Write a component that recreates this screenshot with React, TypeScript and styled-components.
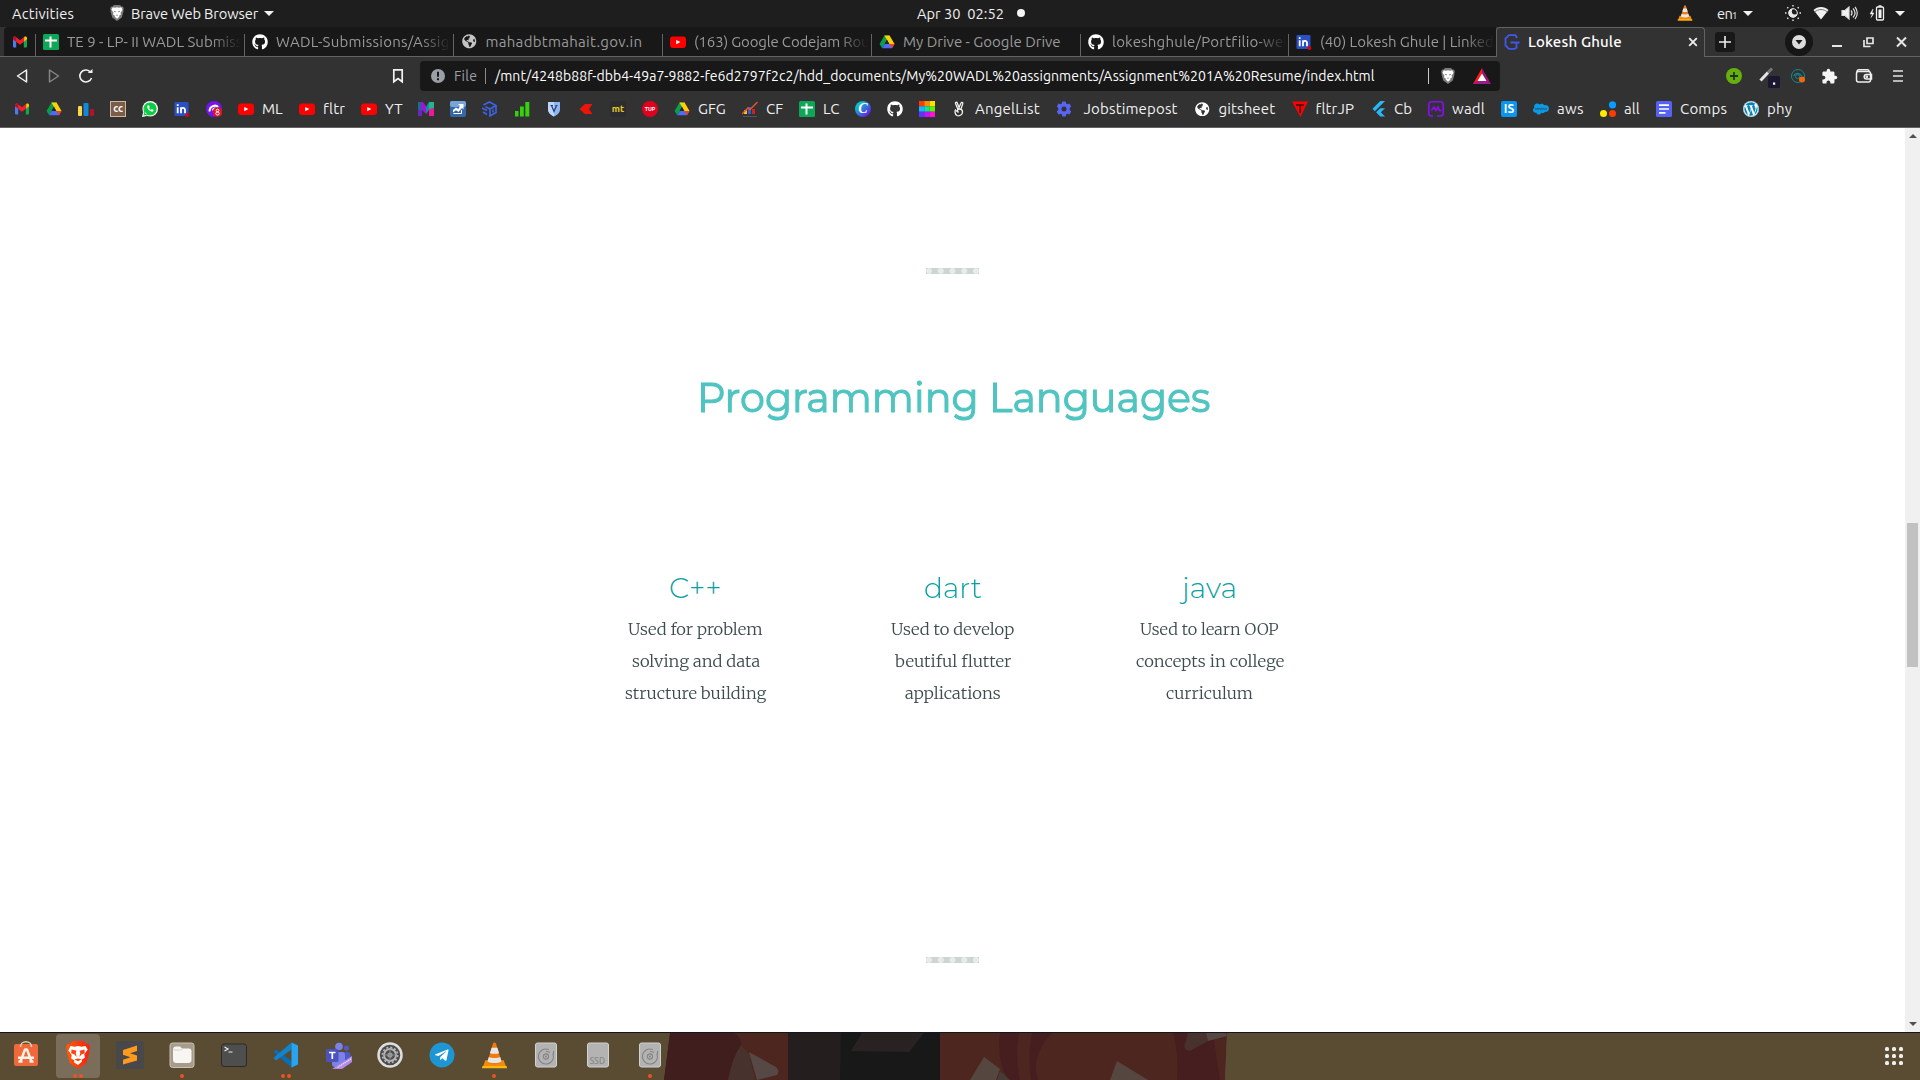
import React, { useLayoutEffect, useRef, useState } from 'react';
import styled, { createGlobalStyle, css } from 'styled-components';
import { FaGithub, FaWhatsapp, FaWordpress, FaSalesforce, FaTelegramPlane, FaGlobeAmericas } from 'react-icons/fa';
import { MdExtension } from 'react-icons/md';
import { SiFlutter } from 'react-icons/si';

const GlobalStyle = createGlobalStyle`
  *, *::before, *::after { box-sizing: border-box; }
  body { margin: 0; background: #fff; overflow: hidden; }
`;

const uiFont = `Ubuntu, 'Noto Sans', 'Open Sans', sans-serif`;

const Screen = styled.div`
  width: 1920px;
  height: 1080px;
  display: flex;
  flex-direction: column;
  overflow: hidden;
  background: #fff;
  font-family: ${uiFont};
  font-size: 14.67px;
  color: #f0f0f0;
`;

/* ---------- fitted text ---------- */

const FitBox = styled.span<{ $w: number }>`
  display: block;
  flex: none;
  width: ${p => p.$w}px;
  white-space: pre;
  text-align: left;
`;
const FitInner = styled.span`
  display: inline-block;
  transform-origin: 0 50%;
`;

function Fit({ w, children, stretch = false, className }: { w: number; children: string; stretch?: boolean; className?: string }) {
  const ref = useRef<HTMLSpanElement>(null);
  const [style, setStyle] = useState<React.CSSProperties>({});
  useLayoutEffect(() => {
    if (!ref.current) return;
    const natural = ref.current.offsetWidth;
    setStyle(stretch
      ? { transform: `scaleX(${w / natural})` }
      : { letterSpacing: `${(w - natural) / children.length}px` });
  }, [w, children, stretch]);
  return (
    <FitBox $w={w} className={className}>
      <FitInner ref={ref} style={style}>{children}</FitInner>
    </FitBox>
  );
}

/* ---------- system panel ---------- */

const Panel = styled.header`
  height: 27px;
  flex: none;
  display: grid;
  grid-template-columns: 917px 1fr 243px;
  background: #1e1e1e;
  line-height: 25px;
`;
const PanelGroup = styled.div<{ $pad?: number }>`
  display: flex;
  align-items: center;
  padding-left: ${p => p.$pad || 0}px;
  height: 26px;
`;
const Gap = styled.i<{ $w: number }>`
  flex: none;
  width: ${p => p.$w}px;
`;
const Caret = styled.i`
  flex: none;
  width: 0;
  height: 0;
  border: 5px solid transparent;
  border-top-color: #f2f2f2;
  border-bottom: 0;
`;
const StatusDot = styled.i`
  width: 8px;
  height: 8px;
  border-radius: 50%;
  background: #f5f5f5;
`;
const SmallText = styled.span`
  font-size: 9.5px;
  width: 6px;
  padding-top: 5px;
`;

/* ---------- tab strip ---------- */

const TabStrip = styled.nav`
  height: 30px;
  flex: none;
  display: flex;
  padding-left: 4px;
  background: linear-gradient(#636363, #636363) 0 29px / 100% 1px no-repeat #323232;
`;
const tabBase = css`
  flex: none;
  height: 29px;
  display: flex;
  align-items: center;
  gap: 8px;
  background: linear-gradient(#636363, #636363) 0 7px / 1px 22px no-repeat #181818;
`;
const PinnedTab = styled.div`
  ${tabBase}
  width: 31px;
  padding-left: 8px;
  background: #181818;
  border-top-left-radius: 4px;
`;
const Tab = styled.div<{ $w: number }>`
  ${tabBase}
  width: ${p => p.$w}px;
  padding-left: 8px;
  font-size: 15px;
  color: #9a9a9a;
`;
const TabTitle = styled.div<{ $fade?: boolean }>`
  flex: none;
  width: 176px;
  line-height: 28px;
  height: 28px;
  ${p => p.$fade && css`mask-image: linear-gradient(90deg, #000 82%, transparent 99%);`}
`;
const ActiveTab = styled.div`
  flex: none;
  width: 209px;
  height: 30px;
  display: flex;
  align-items: center;
  padding: 0 6px 2px 7px;
  background: #323232;
  border: 1px solid #636363;
  border-bottom: 0;
  border-radius: 4px 4px 0 0;
  color: #fff;
  font-weight: 500;
  font-size: 15px;
`;
const NewTab = styled.div`
  flex: none;
  width: 20px;
  height: 20px;
  margin: 5px 50px 0 10px;
  border-radius: 3px;
  background: #181818;
`;
const CircleButton = styled.div`
  flex: none;
  width: 28px;
  height: 28px;
  margin-top: 1px;
  border-radius: 50%;
  background: #161616;
`;
const WindowButtons = styled.div`
  display: flex;
  align-items: center;
  height: 29px;
  padding-left: 16px;
  gap: 16px;
`;

/* ---------- toolbar ---------- */

const Toolbar = styled.div`
  height: 38px;
  flex: none;
  display: flex;
  align-items: center;
  background: #323232;
`;
const AddressBar = styled.div`
  flex: none;
  width: 1080px;
  height: 30px;
  display: flex;
  align-items: center;
  padding-left: 11px;
  border-radius: 4px;
  background: #181818;
  line-height: 28px;
  margin-right: 226px;
`;
const Muted = styled.span`
  color: #9aa0a6;
  font-size: 14px;
`;
const Url = styled.span`
  color: #fff;
  font-size: 14px;
`;
const Divider = styled.i<{ $c?: string }>`
  flex: none;
  width: 1px;
  height: 16px;
  background: ${p => p.$c || '#8a8a8a'};
`;

const Bookmarks = styled.div`
  height: 33px;
  flex: none;
  display: flex;
  align-items: center;
  gap: 16px;
  padding: 0 0 4px 14px;
  background: #323232;
  border-bottom: 1px solid #636363;
  font-size: 15px;
  line-height: 20px;
`;
const Bookmark = styled.div`
  flex: none;
  display: flex;
  align-items: center;
  gap: 8px;
`;
const Tile = styled.span<{ $bg: string; $c?: string; $r?: number; $size?: number; $border?: string }>`
  flex: none;
  width: 16px;
  height: 16px;
  display: flex;
  align-items: center;
  justify-content: center;
  border-radius: ${p => p.$r || 0}px;
  border: ${p => (p.$border ? `1px solid ${p.$border}` : '0')};
  background: ${p => p.$bg};
  color: ${p => p.$c || '#fff'};
  font-size: ${p => p.$size || 11}px;
  font-weight: 700;
  line-height: 14px;
`;
const ScriptTile = styled(Tile)`
  font-family: 'Liberation Serif', serif;
  font-style: italic;
`;

/* ---------- page ---------- */

const Viewport = styled.main`
  height: 904px;
  flex: none;
  display: flex;
  background: #fff;
`;
const Page = styled.section`
  flex: 1;
  display: flex;
  flex-direction: column;
  align-items: center;
  padding-top: 140px;
`;
const Dots = styled.hr`
  flex: none;
  width: 53px;
  height: 6px;
  margin: 0;
  border: 0;
  background: radial-gradient(circle at 3px 50%, #e5edeb 2.6px, #cfd3d2 3.4px) 0 0 / 11.75px 6px;
`;
const Heading = styled.h2`
  margin: 0;
  padding: 97px 0 0 1px;
  height: 294px;
  font: 400 42px/52px Montserrat, Inter, sans-serif;
  -webkit-text-stroke: 1.1px #50c4c0;
  color: #50c4c0;
`;
const Columns = styled.div`
  display: flex;
  height: 389px;
`;
const Skill = styled.article`
  width: 257px;
  display: flex;
  flex-direction: column;
  align-items: center;
`;
const SkillName = styled.h3`
  margin: 0 0 6px;
  padding-top: 1px;
  font: 300 28.5px/38px Montserrat, Inter, sans-serif;
  color: #0aa0a2;
`;
const SkillLine = styled.p`
  margin: 0;
  height: 32px;
  font: 300 16px/32px Merriweather, 'DejaVu Serif Condensed', 'Liberation Serif', serif;
  color: #3e4c4d;
`;
const Scrollbar = styled.aside`
  width: 15px;
  display: flex;
  flex-direction: column;
  align-items: center;
  justify-content: space-between;
  background: #f0f0f0;
  padding: 6px 0 6px;
`;
const ScrollArrow = styled.i<{ $down?: boolean }>`
  width: 0;
  height: 0;
  border: 4px solid transparent;
  ${p => (p.$down ? 'border-top-color: #505050; border-bottom: 0;' : 'border-bottom-color: #505050; border-top: 0;')}
`;
const ScrollTrack = styled.div`
  flex: 1;
  padding-top: 385px;
`;
const Thumb = styled.div`
  width: 11px;
  height: 144px;
  background: #c1c1c1;
`;

/* ---------- dock ---------- */

const Dock = styled.footer`
  position: relative;
  height: 48px;
  flex: none;
  display: flex;
  align-items: stretch;
  padding: 1px 17px 1px 4px;
  gap: 8px;
  background: #5a4c32;
  border-top: 1px solid #15161d;
`;
const Wallpaper = styled.svg`
  position: absolute;
  left: 660px;
  top: 0;
`;
const DockItem = styled.div<{ $active?: boolean }>`
  flex: none;
  width: 44px;
  height: 44px;
  display: grid;
  grid-template-rows: 39px 5px;
  justify-items: center;
  padding-top: 3px;
  border-radius: 4px;
  background: ${p => (p.$active ? '#7a6e5a' : 'transparent')};
`;
const Running = styled.div`
  display: flex;
  gap: 2px;
  margin-top: -2px;
  i { width: 4px; height: 4px; border-radius: 50%; background: #e95420; }
`;
const AppsGrid = styled.div`
  margin: 13px 0 0 auto;
  display: grid;
  grid-template-columns: repeat(3, 4px);
  grid-auto-rows: 4px;
  gap: 3px;
  i { border-radius: 1.5px; background: #f1efec; }
`;
const DiskText = styled.text`
  font: 500 8.5px Ubuntu, 'Noto Sans', sans-serif;
  fill: #858585;
`;

/* ---------- icons ---------- */

const Gmail = ({ s = 16 }) => (
  <svg width={s} height={s} viewBox="0 0 16 16">
    <path d="M1 4v8.5a1 1 0 0 0 1 1h2.2V6.7z" fill="#4a7bf0" />
    <path d="M15 4v8.5a1 1 0 0 1-1 1h-2.2V6.7z" fill="#12a84e" />
    <path d="M11.800 3.600V7.800L15 5.300V4c0-1.500-1.600-2-2.600-1.200z" fill="#fbc505" />
    <path d="M1 5.300V4c0-1.500 1.600-2 2.600-1.200L8 6.200l4.200-3.200v4.600L8 10.700 4.200 7.800z" fill="#f0202c" />
    <path d="M1 4c0-1.500 1.600-2 2.600-1.200l.6.5v4.500L1 5.300z" fill="#b3122f" />
  </svg>
);
const Drive = () => (
  <svg width="16" height="16" viewBox="0 0 16 16">
    <path d="M5.400 1.500h5.200L5.700 10 3.200 14.200.6 9.900z" fill="#0a9d4c" />
    <path d="M5.400 1.500h5.200l4.900 8.400h-5.200z" fill="#fdd107" />
    <path d="M5.700 9.900h9.800L13 14.300H3.200z" fill="#4c6cf5" />
    <path d="M8 5.800l2.300 4.100H5.700z" fill="#26241f" />
    <path d="M10.300 9.900h5.200L13 14.300z" fill="#ee3f2d" />
  </svg>
);
const Sheets = () => (
  <svg width="16" height="16" viewBox="0 0 16 16">
    <rect width="16" height="16" rx="1.500" fill="#0ea657" />
    <path d="M2 6.500h12M7.500 2.500v11" stroke="#fff" strokeWidth="2" />
  </svg>
);
const YouTube = () => (
  <svg width="16" height="16" viewBox="0 0 16 16">
    <rect y="2.500" width="16" height="11.500" rx="3" fill="#f00" />
    <path d="M6.200 6v4.200L10.400 8.100z" fill="#fff" />
  </svg>
);
const LinkedIn = () => (
  <svg width="16" height="16" viewBox="0 0 16 16">
    <rect x="0.500" y="1" width="14" height="14" rx="1" fill="#2b50c4" />
    <path d="M3.700 6.300v6M3.700 3.300v1.700M7 12.300v-6M7 9c0-2.500 4-3 4 0v3.300" stroke="#fff" strokeWidth="1.800" fill="none" />
    <circle cx="13.300" cy="14" r="2" fill="#e00016" />
  </svg>
);
const Globe = ({ c = '#fff' }) => <FaGlobeAmericas size={14.500} color={c} style={{ margin: '0 1px' }} />;
const BraveShield = ({ s = 16 }) => (
  <svg width={s} height={s} viewBox="5.500 4 25 28">
    <path d="M12.500 4h11l2.500 3 2.500-.5 1.500 4-1 3 .3 2-3 10.500L18 32 9.700 26 6.700 15.500l.3-2-1-3 1.500-4L10 7z" fill="#7d7d7d" />
    <path d="M10.500 8l4 .8L18 8l3.500.8 4-.8 2.200 4.600-3.400 4.600.6 3.600-3.400 2 .6 1.600L18 28l-4.100-3.800.6-1.600-3.400-2 .6-3.600-3.400-4.600z" fill="#fff" />
    <path d="M12 14l4 1-1 2zM24 14l-4 1 1 2zM16.500 21h3L18 23.500z" fill="#6a6a6a" />
  </svg>
);
const GLogo = () => (
  <svg width="16" height="16" viewBox="0 0 16 16" fill="none" stroke="#4057ee" strokeWidth="1.800">
    <path d="M13 4L11.500 1.200H5L1.500 4.500v7L5 14.800h5.500l2-1V8.500M6.500 8.500h9" />
  </svg>
);
const Cone = ({ s = 16 }) => (
  <svg width={s} height={s} viewBox="0 0 28 28">
    <path d="M4.500 19h19l3 8h-25z" fill="#f58b0a" />
    <path d="M1.500 25h25l.5 2.200H1z" fill="#ffb90c" />
    <path d="M12.500 1.500a1.600 1.600 0 0 1 3 0L21.500 21c-2 3-13 3-15 0z" fill="#f07a10" />
    <path d="M11 6h6l1.700 5.300c-2 1.200-7.400 1.200-9.400 0zM8.100 15.500c3 1.600 8.800 1.600 11.800 0l1.400 4.600c-3 2.300-11.600 2.300-14.600 0z" fill="#e6e6e6" />
  </svg>
);

const BarsIcon = () => (
  <svg width="16" height="16" viewBox="0 0 16 16">
    <rect x="0" y="5" width="4" height="10" rx="1" fill="#fbd649" />
    <rect x="5.500" y="2" width="5" height="13" rx="1" fill="#1488d8" />
    <rect x="12" y="8" width="4" height="7" rx="1" fill="#b3122a" />
  </svg>
);
const Purple8 = () => (
  <svg width="16" height="16" viewBox="0 0 16 16">
    <circle cx="8" cy="8" r="8" fill="#7215f0" />
    <path d="M3.500 10.500C3.500 4 11 3.500 12 6.500M7 9.500c0-2 2-2.500 3-1.500" stroke="#fff" strokeWidth="2" fill="none" />
    <circle cx="11.500" cy="11" r="4.800" fill="#e21423" />
    <ellipse cx="11.500" cy="9.500" rx="1.400" ry="1.300" stroke="#fff" fill="none" />
    <ellipse cx="11.500" cy="12.500" rx="1.700" ry="1.500" stroke="#fff" fill="none" />
  </svg>
);
const MIcon = () => (
  <svg width="16" height="16" viewBox="0 0 16 16">
    <path d="M0 1h4v14H0z" fill="#176c8d" />
    <path d="M0 9h4v6H0z" fill="#6a27c0" />
    <path d="M3 1h2l3 4v8L3 8z" fill="#a013d9" />
    <path d="M8 6l3-5h2v9l-2-1-3 4z" fill="#0f8fa5" />
    <path d="M11 1h5v6l-5 2z" fill="#20b884" /><path d="M11 8l5-1v8h-5z" fill="#f0189a" />
  </svg>
);
const BlueTile = () => (
  <svg width="16" height="16" viewBox="0 0 16 16">
    <rect width="16" height="16" rx="2" fill="#3466a8" /><rect width="16" height="6" rx="2" fill="#78a5d8" />
    <path d="M8 3h5.500v5.500L12 7 8.500 11 6 9.200 3 11.500V9l3-2.500 2.300 1.600L10 5z" fill="#fff" /><path d="M3.500 12.500h8V9" stroke="#fff" fill="none" />
  </svg>
);
const HexIcon = () => (
  <svg width="16" height="16" viewBox="0 0 16 16" fill="none" stroke="#3d63e8" strokeWidth="1.600">
    <path d="M1.500 4L7.500 1l6.500 3.500v7L8 15V8L3.500 5.700M8 8l6-3.500M0 7l5 2.500M1 11l4 2.500" /><path d="M11 8.500v3" />
  </svg>
);
const GreenBars = () => (
  <svg width="16" height="16" viewBox="0 0 16 16" fill="#37d00c">
    <rect x="1" y="10" width="3.500" height="5.500" /><rect x="6" y="5.500" width="3.800" height="10" /><rect x="11.300" y="1" width="4" height="14.500" />
  </svg>
);
const VShield = () => (
  <svg width="16" height="16" viewBox="0 0 16 16">
    <path d="M2 1h12v7c0 4-3 6-6 7.500C5 14 2 12 2 8z" fill="#8db6f3" /><path d="M2 1h6v14.500C5 14 2 12 2 8z" fill="#bcd5fb" />
    <path d="M5.500 4.500L8 10.500l2.500-6M4.500 4.500h2.500M9.500 4.500h2" stroke="#243a6e" strokeWidth="1.200" fill="none" />
  </svg>
);
const RedArrow = () => <svg width="16" height="16" viewBox="0 0 16 16"><path d="M1.500 8L7 3h7.500L11 8l3.500 5H7z" fill="#ee1408" /></svg>;
const Chart = () => (
  <svg width="16" height="16" viewBox="0 0 16 16">
    <path d="M2 9h3v4H2z" fill="#f2c230" /><path d="M6 6h3v7H6z" fill="#2b5bd7" /><path d="M10 8h3v5h-3z" fill="#c22" />
    <path d="M0 13L6 7l2 1.500L15.500 1" stroke="#e4572e" strokeWidth="1.400" fill="none" /><path d="M1 15.500h14" stroke="#555" />
  </svg>
);
const Rainbow = () => (
  <svg width="16" height="16" viewBox="0 0 16 16">
    {['#ff3c00', '#ff8c00', '#ffe100', '#19b5fe', '#10e0a0', '#5df000', '#5a35ff', '#c313ff', '#ff12d8'].map((c, i) => (
      <rect key={c} x={(i % 3) * 5.330} y={Math.floor(i / 3) * 5.330} width="5.400" height="5.400" fill={c} />
    ))}
  </svg>
);
const Peace = () => (
  <svg width="16" height="16" viewBox="0 0 16 16" fill="none" stroke="#f2f2f2" strokeWidth="1.300">
    <path d="M6.800 8L4.500 2.500c-.4-1.300 1.400-1.700 1.800-.5L8 6.500 10 2c.5-1.200 2.200-.6 1.800.6L10 8M5 8.500C3.500 9 3.500 13 6 14.500c3 1 5.500-1 5.500-3.500 0-2-1-3-3-3s-3 2-1 2.500M5 9.500l2.500 2" />
  </svg>
);
const Gear = () => (
  <svg width="16" height="16" viewBox="0 0 16 16">
    <path d="M6.300.5h3.400l.4 2 1.400.8 2-.7 1.700 2.900-1.500 1.400v2.200l1.500 1.400-1.700 2.900-2-.7-1.400.8-.4 2H6.300l-.4-2-1.400-.8-2 .7L.8 10.500l1.500-1.400V6.900L.8 5.500l1.700-2.900 2 .7 1.400-.8z" fill="#5865f2" />
    <circle cx="8" cy="8" r="2.500" fill="#323232" />
  </svg>
);
const TTriangle = () => (
  <svg width="16" height="16" viewBox="0 0 16 16"><path d="M0 .5h16L8.500 16z" fill="#f00" /><path d="M4 4h8M8.200 4v8" stroke="#3a0d0d" strokeWidth="1.700" /></svg>
);
const WadlIcon = () => (
  <svg width="16" height="16" viewBox="0 0 16 16" fill="none" stroke="#8d0cf5" strokeWidth="1.600">
    <path d="M5 15H3.500A2.700 2.700 0 0 1 .8 12.300V3.500A2.700 2.700 0 0 1 3.500.8h9a2.700 2.700 0 0 1 2.700 2.700v8.800a2.700 2.700 0 0 1-2.700 2.700H9" /><path d="M3.500 9.500L6 6l2 3.500L10 6l1.500 3.500h2" />
  </svg>
);
const TriDots = () => (
  <svg width="16" height="16" viewBox="0 0 16 16"><circle cx="12.500" cy="3.800" r="3.600" fill="#0a9bff" /><circle cx="3.500" cy="12.500" r="3.500" fill="#ffea00" /><circle cx="12.500" cy="12.500" r="3.500" fill="#ff3b05" /></svg>
);
const FormIcon = () => (
  <svg width="16" height="16" viewBox="0 0 16 16"><rect width="16" height="16" rx="1.500" fill="#5662f6" /><path d="M3 4.200h10M3 8h10M3 11.800h6.500" stroke="#fff" strokeWidth="1.700" /></svg>
);
const WordPress = () => <Tile $bg="#fff" $r={8}><FaWordpress size={16} color="#0a84b8" /></Tile>;
const WhatsApp = () => (
  <svg width="16" height="16" viewBox="0 0 16 16"><circle cx="8.200" cy="7.800" r="7.800" fill="#fff" /><path d="M0 16l1.200-5L5 15z" fill="#fff" /><FaWhatsapp x="0.500" y="0.500" size={15} color="#06c93f" /><circle cx="8.200" cy="7.700" r="6" fill="#06cf42" /><path d="M5.300 4.800c-.8 2.800 2.900 6.500 5.700 5.800l.6-1.500-1.800-1-1 .8-1.800-1.800.8-1-.9-1.800z" fill="#fff" /></svg>
);

const bookmarks: Array<[React.ReactNode, string?, number?]> = [
  [<Gmail />], [<Drive />], [<BarsIcon />],
  [<Tile $bg="#7b5c46" $border="#cbb9a6" $size={10}>cc</Tile>],
  [<WhatsApp />], [<LinkedIn />], [<Purple8 />],
  [<YouTube />, 'ML', 21], [<YouTube />, 'fltr', 22], [<YouTube />, 'YT', 17],
  [<MIcon />], [<BlueTile />], [<HexIcon />], [<GreenBars />], [<VShield />], [<RedArrow />],
  [<Tile $bg="#2d2d31" $c="#e6cc1c" $r={3} $size={9.5}>mt</Tile>],
  [<Tile $bg="#e2001f" $r={8} $size={5.5}>TUP</Tile>],
  [<Drive />, 'GFG', 28], [<Chart />, 'CF', 17], [<Sheets />, 'LC', 16],
  [<ScriptTile $bg="linear-gradient(135deg,#06c4d0 20%,#6420e8 85%)" $r={8} $size={14}>C</ScriptTile>],
  [<FaGithub size={16} color="#fff" />], [<Rainbow />],
  [<Peace />, 'AngelList', 65], [<Gear />, ' Jobstimepost', 98], [<Globe />, 'gitsheet', 57],
  [<TTriangle />, 'fltrJP', 39], [<SiFlutter size={15.5} color="#27b8f5" />, 'Cb', 18], [<WadlIcon />, 'wadl', 33],
  [<Tile $bg="#0996f0" $r={2} $size={12}>IS</Tile>],
  [<FaSalesforce size={16} color="#0b9ae3" />, 'aws', 27],
  [<TriDots />, 'all', 16], [<FormIcon />, 'Comps', 47], [<WordPress />, 'phy', 25],
];

const tabs: Array<{ w: number; icon: React.ReactNode; title: string; tw: number; fade?: boolean }> = [
  { w: 209, icon: <Sheets />, title: 'TE 9 - LP- II WADL Submiss', tw: 175, fade: true },
  { w: 209, icon: <FaGithub size={16} color="#fff" />, title: 'WADL-Submissions/Assig', tw: 174, fade: true },
  { w: 209, icon: <Globe c="#c4c4c4" />, title: 'mahadbtmahait.gov.in', tw: 157 },
  { w: 209, icon: <YouTube />, title: '(163) Google Codejam Rou', tw: 175, fade: true },
  { w: 209, icon: <Drive />, title: 'My Drive - Google Drive', tw: 158 },
  { w: 208, icon: <FaGithub size={16} color="#fff" />, title: 'lokeshghule/Portfilio-wel', tw: 175, fade: true },
  { w: 208, icon: <LinkedIn />, title: '(40) Lokesh Ghule | Linked', tw: 174, fade: true },
];

const skills: Array<{ name: string; w: number; lines: Array<[string, number]> }> = [
  { name: 'C++', w: 53, lines: [['Used for problem', 135], ['solving and data', 128], ['structure building', 141]] },
  { name: 'dart', w: 58, lines: [['Used to develop', 123], ['beutiful flutter', 116], ['applications', 96]] },
  { name: 'java', w: 55, lines: [['Used to learn OOP', 139], ['concepts in college', 148], ['curriculum', 87]] },
];

/* ---------- dock icons ---------- */

const Software = () => (
  <svg width="36" height="36" viewBox="0 0 36 36">
    <rect x="6" y="7" width="24" height="22" rx="2" fill="#f0693c" />
    <path d="M12.500 10C12.500 3 23.500 3 23.500 10" stroke="#e5cfae" strokeWidth="1.600" fill="none" />
    <path d="M12.500 24.500l4.500-12h2l4.500 12M10 20.800h16M10.500 24.500h4M21.500 24.500h4" stroke="#fff3e8" strokeWidth="2.400" fill="none" strokeLinejoin="bevel" />
  </svg>
);
const BraveApp = () => (
  <svg width="36" height="36" viewBox="0 0 36 36">
    <defs><linearGradient id="br"><stop offset="0" stopColor="#ff5a08" /><stop offset="1" stopColor="#fb1e10" /></linearGradient></defs>
    <path d="M12.500 4h11l2.500 3 2.500-.5 1.500 4-1 3 .3 2-3 10.500L18 32 9.700 26 6.700 15.500l.3-2-1-3 1.500-4L10 7z" fill="url(#br)" />
    <path d="M10.500 9l4 .8L18 9l3.500.8 4-.8 2.200 3.600-3.400 4.600.6 3.600-3.400 2 .6 1.600L18 28l-4.100-2.800.6-1.600-3.400-2 .6-3.600-3.400-4.600z" fill="#fff" />
    <path d="M11.500 12.500l5 1.200-.8 2.300 1 4-2.200-2.500-3.300-1.200zM24.500 12.500l-5 1.200.8 2.300-1 4 2.200-2.500 3.300-1.200zM14.500 22.300l3.500-.8 3.500.8-3.500 1.900z" fill="#fd4310" />
  </svg>
);
const Sublime = () => (
  <svg width="36" height="36" viewBox="0 0 36 36">
    <rect x="4" y="4" width="28" height="28" rx="1.500" fill="#48484a" />
    <path d="M11 14.500L25 10v5.500l-7 2.200 7 2.300v5L11 29v-4.800l7.500-2.500-7.500-2.400z" fill="#ff9a1f" transform="translate(0 -1.500)" />
  </svg>
);
const Files = () => (
  <svg width="36" height="36" viewBox="0 0 36 36">
    <rect x="6" y="6" width="24" height="24.500" rx="2.500" fill="#a59c8b" stroke="#c8c1b4" />
    <path d="M9 12.500a3 3 0 0 1 3-3h4l2 2h7a2.500 2.500 0 0 1 2.500 2.500v9a3 3 0 0 1-3 3h-12a3.500 3.500 0 0 1-3.500-3.500z" fill="#f8f6f2" />
    <path d="M9.500 13h8l1.500-1.500" stroke="#d8d2c6" fill="none" />
  </svg>
);
const Terminal = () => (
  <svg width="36" height="36" viewBox="0 0 36 36">
    <rect x="5.500" y="7" width="25" height="22.500" rx="2.500" fill="#4e4e4e" stroke="#2c2a28" />
    <path d="M8.500 10l3.500 2-3.500 2M12.500 15h4" stroke="#ececec" strokeWidth="1.200" fill="none" />
  </svg>
);
const Code = () => (
  <svg width="36" height="36" viewBox="0 0 36 36">
    <path d="M5.500 15L8 12.500l15.500 11.500v6.500z" fill="#0a6db5" />
    <path d="M23.500 5.500L5.500 21l2.500 2.500 15.500-11z" fill="#1284cf" />
    <path d="M23.500 5.500l6.500 3v19l-6.500 3z" fill="#28a4f0" />
  </svg>
);
const Teams = () => (
  <svg width="36" height="36" viewBox="1 0 36 36">
    <circle cx="20" cy="9.500" r="3.800" fill="#7b83eb" /><circle cx="27.500" cy="11" r="2.600" fill="#5059c9" />
    <rect x="22" y="15" width="9.500" height="13" rx="3" fill="#5059c9" /><rect x="13" y="15" width="13" height="15" rx="3" fill="#7b83eb" />
    <rect x="7" y="12" width="12.500" height="13" rx="1.500" fill="#4b53bc" /><path d="M10 15.500h6.500M13.300 15.500v6.500" stroke="#fff" strokeWidth="1.700" />
    <path d="M33 19v6l-10 7H13z" fill="#b48be6" /><path d="M18.500 30.500L32 21.800" stroke="#e9dafa" strokeWidth="1.200" strokeDasharray="1.500 .6" />
  </svg>
);
const Settings = () => (
  <svg width="36" height="36" viewBox="0 0 36 36" fill="none">
    <circle cx="18" cy="18" r="11.500" fill="#4c4c4c" stroke="#dedede" strokeWidth="2.500" />
    <circle cx="18" cy="18" r="6" stroke="#b8b8b8" strokeWidth="1.800" />
    <circle cx="18" cy="18" r="7.600" stroke="#b8b8b8" strokeWidth="1.600" strokeDasharray="2 1.980" />
    <circle cx="18" cy="18" r="2.600" fill="#a0a0a0" /><path d="M18 12v12M12 18h12" stroke="#8f8f8f" />
  </svg>
);
const Telegram = () => (
  <svg width="36" height="36" viewBox="0 0 36 36">
    <circle cx="18" cy="18" r="12.500" fill="#1e96d4" />
    <FaTelegramPlane x="10" y="10.500" size={15.5} color="#fff" />
  </svg>
);
const Disk = ({ ssd = false }) => (
  <svg width="36" height="36" viewBox="0 0 36 36" fill="none">
    <rect x="7.500" y="6" width="21" height="24" rx="2" fill="#b3b3b3" stroke="#d2d2d2" />
    {ssd ? <DiskText x="9.700" y="27">SSD</DiskText> : (
      <g stroke="#858585" strokeWidth="1.100"><path d="M25.500 14v3.500M24.800 16.500a7.500 7.500 0 1 1-4-3.900M21.800 15.500a5.200 5.200 0 0 0-3.800-1" /><circle cx="18" cy="19.500" r="2.600" /><circle cx="18" cy="19.500" r=".4" /></g>
    )}
  </svg>
);

const dock: Array<[React.ReactNode, number, boolean?]> = [
  [<Software />, 0], [<BraveApp />, 2, true], [<Sublime />, 0], [<Files />, 1], [<Terminal />, 0], [<Code />, 2],
  [<Teams />, 0], [<Settings />, 0], [<Telegram />, 0], [<Cone s={27} />, 1], [<Disk />, 0], [<Disk ssd />, 0], [<Disk />, 1],
];
const DockIcon = styled.div`
  width: 36px;
  height: 36px;
  display: flex;
  align-items: center;
  justify-content: center;
`;

export default function App() {
  return (
    <Screen>
      <GlobalStyle />
      <Panel>
        <PanelGroup $pad={12}>
          <Fit w={62}>Activities</Fit>
          <Gap $w={35} /><BraveShield /><Gap $w={6} />
          <Fit w={127}>Brave Web Browser</Fit>
          <Gap $w={6} /><Caret />
        </PanelGroup>
        <PanelGroup>
          <Fit w={87}>Apr 30  02:52</Fit>
          <Gap $w={13} /><StatusDot />
        </PanelGroup>
        <PanelGroup>
          <Cone s={16} />
          <Gap $w={24} /><Fit w={15}>en</Fit><SmallText>1</SmallText>
          <Gap $w={5} /><Caret /><Gap $w={32} />
          <svg width="16" height="16" viewBox="0 0 16 16" fill="none" stroke="#e8e8e8">
            <circle cx="8" cy="8" r="4" fill="#e8e8e8" /><circle cx="9.800" cy="6.500" r="3" fill="#1e1e1e" stroke="none" />
            <circle cx="8" cy="8" r="4.300" />
            <path d="M8 0v1.500M8 14.500V16M0 8h1.500M14.500 8H16M2.300 2.300l1 1M12.700 12.700l1 1M2.300 13.700l1-1M12.700 3.300l1-1" strokeWidth="1.400" />
          </svg>
          <Gap $w={12} />
          <svg width="16" height="16" viewBox="0 0 16 16"><path d="M8 14.500L.5 5c4-4 11-4 15 0z" fill="#f2f2f2" /><path d="M1.500 7c4-3.300 9-3.300 13 0" stroke="#777" fill="none" /></svg>
          <Gap $w={12} />
          <svg width="17" height="16" viewBox="0 0 17 16" fill="none" stroke="#ddd" strokeWidth="1.200"><path d="M1 5.500h3L8 2v12l-4-3.500H1z" fill="#f2f2f2" /><path d="M10 5.500c1.300 1.500 1.300 3.500 0 5M12 3.500c2.500 2.700 2.500 6.300 0 9M14 2c3 3.500 3 8.500 0 12" /></svg>
          <Gap $w={11} />
          <svg width="16" height="16" viewBox="0 0 16 16" fill="none" stroke="#f2f2f2"><path d="M4 4L1 9h2.500L2 12.500 5 8H3z" fill="#f2f2f2" strokeWidth=".5" /><rect x="7.500" y="2" width="7" height="13" rx="1" strokeWidth="1.300" /><path d="M9.500 1h3" strokeWidth="1.500" /><rect x="9.500" y="4.500" width="3" height="8.500" fill="#f2f2f2" stroke="none" /></svg>
          <Gap $w={10} /><Caret />
        </PanelGroup>
      </Panel>

      <TabStrip>
        <PinnedTab><Gmail /></PinnedTab>
        {tabs.map(t => (
          <Tab key={t.title} $w={t.w}>
            {t.icon}
            <TabTitle $fade={t.fade}><Fit w={t.tw}>{t.title}</Fit></TabTitle>
          </Tab>
        ))}
        <ActiveTab>
          <GLogo /><Gap $w={8} /><Fit w={94}>Lokesh Ghule</Fit><Gap $w={66} />
          <svg width="10" height="10" viewBox="0 0 10 10" stroke="#eee" strokeWidth="1.800"><path d="M1.200 1.200l7.600 7.600M8.800 1.200L1.200 8.800" /></svg>
        </ActiveTab>
        <NewTab><svg width="20" height="20" viewBox="0 0 20 20" stroke="#eee" strokeWidth="1.600"><path d="M4 10h12M10 4v12" /></svg></NewTab>
        <CircleButton>
          <svg width="28" height="28" viewBox="0 0 28 28"><circle cx="14" cy="14" r="7" fill="#dcdcdc" /><path d="M10.500 12h7L14 16.500z" fill="#1b1b1b" /></svg>
        </CircleButton>
        <WindowButtons>
          <svg width="16" height="14" viewBox="0 0 16 14"><path d="M3 11h10" stroke="#e6e6e6" strokeWidth="2" /></svg>
          <svg width="16" height="14" viewBox="0 0 16 14" fill="none" stroke="#e6e6e6" strokeWidth="1.700"><path d="M6 3h6v5.500H6zM3 5v6.500h6.500" /></svg>
          <svg width="16" height="14" viewBox="0 0 16 14" stroke="#e6e6e6" strokeWidth="2"><path d="M4 2.500l9 9M13 2.500l-9 9" /></svg>
        </WindowButtons>
      </TabStrip>

      <Toolbar>
        <Gap $w={15} />
        <svg width="14" height="16" viewBox="0 0 14 16" fill="none" stroke="#f2f2f2" strokeWidth="1.500" strokeLinejoin="round"><path d="M2.500 8L11.500 2v12z" /></svg>
        <Gap $w={18} />
        <svg width="14" height="16" viewBox="0 0 14 16" fill="none" stroke="#858585" strokeWidth="1.500" strokeLinejoin="round"><path d="M11.500 8L2.500 2v12z" /></svg>
        <Gap $w={17} />
        <svg width="16" height="16" viewBox="0 0 16 16" fill="none" stroke="#f2f2f2" strokeWidth="1.600"><path d="M13.500 10A6 6 0 1 1 12 3.600" /><path d="M9.700 5h4.800V1z" fill="#f2f2f2" stroke="none" /></svg>
        <Gap $w={296} />
        <svg width="16" height="16" viewBox="0 0 16 16" fill="none" stroke="#f2f2f2" strokeWidth="1.700"><path d="M3.800 1.800h8.400v12L8 10.600l-4.200 3.200z" /></svg>
        <Gap $w={14} />
        <AddressBar>
          <svg width="14" height="14" viewBox="0 0 14 14"><circle cx="7" cy="7" r="7" fill="#9aa0a6" /><path d="M7 2.800v5M7 9.200v2" stroke="#181818" strokeWidth="2" /></svg>
          <Gap $w={9} /><Muted><Fit w={23}>File</Fit></Muted>
          <Gap $w={8} /><Divider /><Gap $w={9} />
          <Url><Fit w={879}>/mnt/4248b88f-dbb4-49a7-9882-fe6d2797f2c2/hdd_documents/My%20WADL%20assignments/Assignment%201A%20Resume/index.html</Fit></Url>
          <Gap $w={54} /><Divider $c="#c8c8c8" /><Gap $w={11} /><BraveShield s={16} /><Gap $w={17} />
          <svg width="18" height="16" viewBox="0 0 18 16"><path d="M9 0L0 16h9z" fill="#ff1a16" /><path d="M9 0l9 16H9z" fill="#8c1a70" /><path d="M0 16l5-3.500h8.500L18 16z" fill="#a01a88" /><path d="M9 5.500l4.500 7.500h-9z" fill="#fff" /></svg>
        </AddressBar>
        <svg width="16" height="16" viewBox="0 0 16 16"><circle cx="8" cy="8" r="8" fill="#66b00c" /><path d="M4 8h8M8 4v8" stroke="#232" strokeWidth="1.800" /></svg>
        <Gap $w={17} />
        <svg width="22" height="24" viewBox="0 0 22 24"><path d="M1.500 16.500L9 8.500" stroke="#e6e6e6" strokeWidth="3" /><path d="M9 8.500l4-4" stroke="#777" strokeWidth="3" /><rect x="9" y="12" width="12" height="12" rx="1.500" fill="#1c1730" /><rect x="14" y="18.500" width="2.200" height="2.200" fill="#fff" /></svg>
        <Gap $w={8} />
        <svg width="18" height="16" viewBox="0 0 18 16" fill="none" stroke="#128793"><circle cx="9" cy="8" r="6.500" /><path d="M4.500 8c2-3.500 6-3.500 8 0" strokeWidth="1.300" /><circle cx="8.500" cy="8.500" r="2" /><circle cx="13" cy="11.500" r="3" fill="#ee6a10" stroke="none" /></svg>
        <Gap $w={14} />
        <MdExtension size={17} color="#f5f5f5" />
        <Gap $w={17} />
        <svg width="18" height="16" viewBox="0 0 18 16" fill="none" stroke="#eee" strokeWidth="1.500"><rect x="1.500" y="3.500" width="14" height="10.500" rx="2" /><path d="M2 4c0-2 1-2.200 2-2.200h8.500c1.500 0 1.500 1 1.500 1.500M16.500 6.500h-5a2.300 2.300 0 0 0 0 4.600h5z" /><circle cx="11.800" cy="8.800" r=".6" /></svg>
        <Gap $w={20} />
        <svg width="10" height="14" viewBox="0 0 10 14" stroke="#e4e4e4" strokeWidth="1.700"><path d="M0 2h10M0 7h10M0 12h10" /></svg>
      </Toolbar>

      <Bookmarks>
        {bookmarks.map(([icon, label, w], i) => (
          <Bookmark key={i}>{icon}{label && <Fit w={w!}>{label}</Fit>}</Bookmark>
        ))}
      </Bookmarks>

      <Viewport>
        <Page>
          <Dots />
          <Heading><Fit w={513} stretch>Programming Languages</Fit></Heading>
          <Columns>
            {skills.map(s => (
              <Skill key={s.name}>
                <SkillName><Fit w={s.w} stretch>{s.name}</Fit></SkillName>
                {s.lines.map(([line, w]) => <SkillLine key={line}><Fit w={w} stretch>{line}</Fit></SkillLine>)}
              </Skill>
            ))}
          </Columns>
          <Dots />
        </Page>
        <Scrollbar>
          <ScrollArrow />
          <ScrollTrack><Thumb /></ScrollTrack>
          <ScrollArrow $down />
        </Scrollbar>
      </Viewport>

      <Dock>
        <Wallpaper width="570" height="47" viewBox="660 1033 570 47">
          <path d="M670 1033h557v5l-2 42H664z" fill="#4e2620" />
          <path d="M670 1033h64q8 5 7 12l-12 35h-65z" fill="#411e1e" />
          <path d="M741 1045l8 9 6 26h-27q4-22 13-35z" fill="#48322e" />
          <path d="M749 1052l27 15q4 4 1 8l-20 5z" fill="#554845" />
          <path d="M788 1033h53v47h-53z" fill="#241e1e" />
          <path d="M841 1033h99v47H840z" fill="#191818" />
          <path d="M862 1033h62l-15 19-58-1z" fill="#292222" />
          <path d="M1000 1033h19q-4 24 1 47h-12q-12-20-8-47zM1032 1033h20q-22 24-14 47h-7q-4-24 1-47z" fill="#471e20" />
          <path d="M984 1057l16 12-4 11h-26z" fill="#554640" /><path d="M1000 1071l10 9h-13z" fill="#463b37" />
          <path d="M1117 1061l31 19h-38z" fill="#554640" />
          <path d="M1173 1033h40l7 47h-43q2-24-4-47z" fill="#471e20" />
          <path d="M1188 1033h18l2 8-18 10q-7-1-5-7z" fill="#48322e" /><path d="M1206 1033h20l1 3-19 5z" fill="#554845" />
          <path d="M1227 1033h3v47h-5z" fill="#5a4c32" />
        </Wallpaper>
        {dock.map(([icon, running, active], i) => (
          <DockItem key={i} $active={active}>
            <DockIcon>{icon}</DockIcon>
            <Running>{Array.from({ length: running }, (_, n) => <i key={n} />)}</Running>
          </DockItem>
        ))}
        <AppsGrid>{Array.from({ length: 9 }, (_, n) => <i key={n} />)}</AppsGrid>
      </Dock>
    </Screen>
  );
}
